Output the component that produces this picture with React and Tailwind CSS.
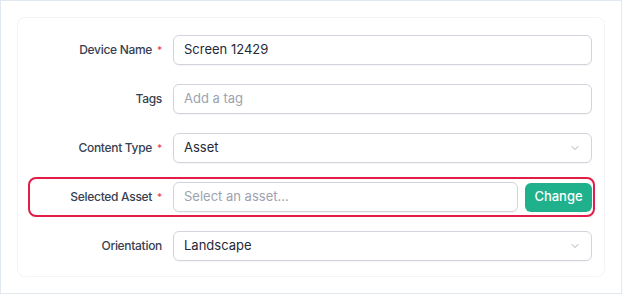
import { ChevronDown } from 'lucide-react'

function Field({ label, required, children, highlight }) {
  return (
    <div className="relative flex items-center">
      {highlight && (
        <div className="pointer-events-none absolute -left-[2px] -right-[3px] -top-[5px] -bottom-[5px] rounded-lg border-2 border-[#e11d48]"></div>
      )}
      <label className="w-[133px] shrink-0 pr-px text-right text-[12px] font-medium tracking-[-0.3px] text-[#374151]">
        {label}
        {required && <span className="ml-[5px] text-[10px] text-[#ef4444]">*</span>}
      </label>
      <div className="ml-[10px] flex flex-1 items-center gap-[7px]">{children}</div>
    </div>
  )
}

function TextInput({ value, placeholder }) {
  return (
    <div className="flex h-[30px] flex-1 items-center rounded-md border border-[#d1d5db] bg-white px-[10px] text-[13px] shadow-[0_1px_1px_rgba(0,0,0,0.04)]">
      {value ? (
        <span className="text-[#1f2937]">{value}</span>
      ) : (
        <span className="text-[#9ca3af]">{placeholder}</span>
      )}
    </div>
  )
}

function SelectInput({ value }) {
  return (
    <div className="flex h-[30px] flex-1 items-center justify-between rounded-md border border-[#d1d5db] bg-white pl-[10px] pr-[10px] text-[13px] shadow-[0_1px_1px_rgba(0,0,0,0.04)]">
      <span className="text-[#1f2937]">{value}</span>
      <ChevronDown size={12} strokeWidth={1.75} className="text-[#9ca3af]" />
    </div>
  )
}

export default function App() {
  return (
    <div className="bg-white" style={{ fontFamily: 'Inter, "Noto Sans", sans-serif' }}>
      <div className="w-[622px] border border-[#e2e8f0] bg-white p-4">
        <div className="rounded-lg border border-[#f1f5f9] bg-white px-3 pt-[17px] pb-[15px]">
          <div className="flex flex-col gap-[19px]">
            <Field label="Device Name" required>
              <TextInput value="Screen 12429" />
            </Field>
            <Field label="Tags">
              <TextInput placeholder="Add a tag" />
            </Field>
            <Field label="Content Type" required>
              <SelectInput value="Asset" />
            </Field>
            <Field label="Selected Asset" required highlight>
              <TextInput placeholder="Select an asset..." />
              <button className="h-[29px] w-[67px] rounded-md bg-[#1fb08c] text-[13px] font-medium text-white">
                Change
              </button>
            </Field>
            <Field label="Orientation">
              <SelectInput value="Landscape" />
            </Field>
          </div>
        </div>
      </div>
    </div>
  )
}
